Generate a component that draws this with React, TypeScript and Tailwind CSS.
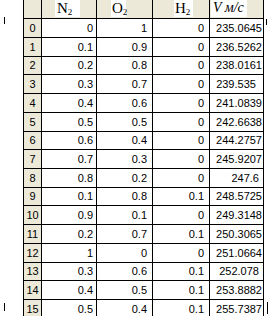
const rows: [string, string, string, string][] = [
  ["0", "1", "0", "235.0645"],
  ["0.1", "0.9", "0", "236.5262"],
  ["0.2", "0.8", "0", "238.0161"],
  ["0.3", "0.7", "0", "239.535  "],
  ["0.4", "0.6", "0", "241.0839"],
  ["0.5", "0.5", "0", "242.6638"],
  ["0.6", "0.4", "0", "244.2757"],
  ["0.7", "0.3", "0", "245.9207"],
  ["0.8", "0.2", "0", "247.6 "],
  ["0.1", "0.8", "0.1", "248.5725"],
  ["0.9", "0.1", "0", "249.3148"],
  ["0.2", "0.7", "0.1", "250.3065"],
  ["1", "0", "0", "251.0664"],
  ["0.3", "0.6", "0.1", "252.078 "],
  ["0.4", "0.5", "0.1", "253.8882"],
  ["0.5", "0.4", "0.1", "255.7387"],
];

const heights = [
  "h-[19px]", "h-[19px]", "h-[18px]", "h-[19px]", "h-[19px]", "h-[19px]", "h-[18px]", "h-[19px]",
  "h-[19px]", "h-[18px]", "h-[19px]", "h-[19px]", "h-[19px]", "h-[18px]", "h-[19px]", "h-[19px]",
];

const cell = "flex items-center justify-end border-r border-black whitespace-pre";

const Mark = ({ className }: { className: string }) => (
  <div className={`absolute w-px bg-black ${className}`} />
);

const App = () => {
  return (
    <div className="relative w-[269px] h-[316px] overflow-hidden bg-white font-['Liberation_Sans',Arial,sans-serif] text-[11px] text-black">
      <Mark className="left-[4px] top-[17px] h-[7px]" />
      <Mark className="left-[4px] top-[303px] h-[8px]" />
      <Mark className="left-[266px] top-[19px] h-[6px]" />
      <Mark className="left-[267px] top-[302px] h-[12px]" />

      <div className="ml-[23px] w-[241px] border-l border-black">
        {/* header */}
        <div className="flex h-[19px] border-b border-black bg-[#ece9d8] font-['Liberation_Serif',serif]">
          <div className="w-[18px] border-r border-black" />
          <div className="w-[55px] border-r border-black">
            <span className="ml-[13px] block h-[17px] w-[25px] whitespace-nowrap bg-white pl-[2px] text-[15px] leading-[16px]">
              N<sub className="text-[9px]">2</sub>
            </span>
          </div>
          <div className="w-[56px] border-r border-black">
            <span className="ml-[14px] block h-[17px] w-[15px] whitespace-nowrap bg-white pl-[1px] text-[15px] leading-[16px]">
              O<sub className="text-[9px]">2</sub>
            </span>
          </div>
          <div className="w-[57px] border-r border-black">
            <span className="ml-[21px] block h-[17px] w-[19px] whitespace-nowrap bg-white pl-[1px] text-[15px] leading-[16px]">
              H<sub className="text-[9px]">2</sub>
            </span>
          </div>
          <div className="w-[54px] border-r border-black">
            <span className="ml-[1px] block h-[17px] w-[36px] whitespace-nowrap bg-white pl-[2px] text-[14px] italic leading-[16px]">
              V м/с
            </span>
          </div>
        </div>

        {rows.map((r, i) => (
          <div key={i} className={`flex ${heights[i]} border-b border-black`}>
            <div className="flex w-[18px] items-center justify-center border-r border-black bg-[#ece9d8]">
              {i}
            </div>
            <div className={`${cell} w-[55px] pr-[3px]`}>{r[0]}</div>
            <div className={`${cell} w-[56px] pr-[5px]`}>{r[1]}</div>
            <div className={`${cell} w-[57px] pr-[5px]`}>{r[2]}</div>
            <div className={`${cell} w-[54px] pr-[1px]`}>{r[3]}</div>
          </div>
        ))}
      </div>
    </div>
  );
};

export default App;
